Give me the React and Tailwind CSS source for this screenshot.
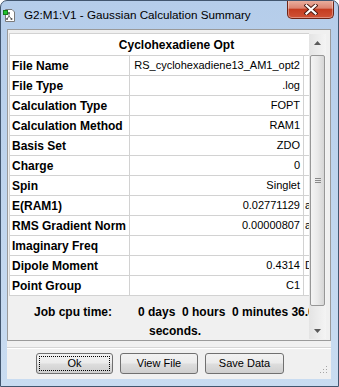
import React from 'react';

const rows = [
  ['File Name', 'RS_cyclohexadiene13_AM1_opt2', ''],
  ['File Type', '.log', ''],
  ['Calculation Type', 'FOPT', ''],
  ['Calculation Method', 'RAM1', ''],
  ['Basis Set', 'ZDO', ''],
  ['Charge', '0', ''],
  ['Spin', 'Singlet', ''],
  ['E(RAM1)', '0.02771129', 'a.u.'],
  ['RMS Gradient Norm', '0.00000807', 'a.u.'],
  ['Imaginary Freq', '', ''],
  ['Dipole Moment', '0.4314', 'Debye'],
  ['Point Group', 'C1', ''],
];

function AppIcon() {
  return (
    <svg width="12" height="14" viewBox="0 0 12 14" className="shrink-0">
      <path d="M2.5 1.5 H9 L11.5 4 V13.5 H2.5 Z" fill="#ffffff" stroke="#7a7a7a" />
      <path d="M6 5 V8 M6 8 L4 11 M6 8 L8.5 11" stroke="#6b6b6b" strokeWidth="1" fill="none" />
      <circle cx="6" cy="5" r="1" fill="#555" />
      <circle cx="4" cy="11" r="1" fill="#555" />
      <circle cx="8.5" cy="11" r="1" fill="#555" />
      <rect x="0.5" y="2.5" width="4" height="4" fill="#22c22e" stroke="#137a1a" />
    </svg>
  );
}

function CloseButton() {
  return (
    <div className="mt-[-1px] w-[47px] h-[19px] rounded-b-[5px] border border-t-0 border-[#6e2416] bg-[linear-gradient(to_bottom,#ebb3a3_0%,#dc8471_45%,#c53c20_52%,#cf5236_100%)] flex items-center justify-center shadow-[inset_0_0_0_1px_rgba(255,255,255,0.35)]">
      <svg width="14" height="11" viewBox="0 0 14 11">
        <path d="M2.5 1.5 L11.5 9.5 M11.5 1.5 L2.5 9.5" stroke="#4a1a12" strokeWidth="4" strokeLinecap="square" />
        <path d="M2.5 1.5 L11.5 9.5 M11.5 1.5 L2.5 9.5" stroke="#ffffff" strokeWidth="2.2" strokeLinecap="square" />
      </svg>
    </div>
  );
}

function ScrollBar() {
  return (
    <div className="w-[17px] mt-[4px] mb-[1px] mr-[4px] flex flex-col bg-gradient-to-r from-[#e4e4e4] to-[#f4f4f4]">
      <div className="h-[17px] flex items-center justify-center">
        <svg width="7" height="4" viewBox="0 0 7 4">
          <path d="M0 4 L3.5 0 L7 4 Z" fill="#5a5a5a" />
        </svg>
      </div>
      <div className="h-[4px]" />
      <div className="h-[251px] mx-[1px] rounded-[2px] border border-[#979797] bg-gradient-to-r from-[#f4f4f4] via-[#e9e9e9] to-[#d6d6d6] flex flex-col items-center justify-center gap-[1px]">
        <div className="w-[6px] h-[1px] bg-[#8a8a8a]" />
        <div className="w-[6px] h-[1px] bg-[#8a8a8a]" />
        <div className="w-[6px] h-[1px] bg-[#8a8a8a]" />
      </div>
      <div className="flex-1" />
      <div className="h-[17px] flex items-center justify-center">
        <svg width="7" height="4" viewBox="0 0 7 4">
          <path d="M0 0 L7 0 L3.5 4 Z" fill="#5a5a5a" />
        </svg>
      </div>
    </div>
  );
}

function Button({ children, width, focused }) {
  return (
    <div
      className={`${width} h-[21px] rounded-[3px] border border-[#707070] bg-[linear-gradient(to_bottom,#f2f2f2_0%,#ebebeb_48%,#dddddd_52%,#cfcfcf_100%)] p-[2px]`}
    >
      <div
        className={`w-full h-full flex items-center justify-center text-[11px] text-black ${
          focused ? 'border border-dotted border-black' : ''
        }`}
      >
        {children}
      </div>
    </div>
  );
}

export default function App() {
  return (
    <div className="w-[339px] h-[387px] rounded-t-[7px] border border-[#42566f] bg-gradient-to-b from-[#b5cdea] to-[#c9dcf1] flex flex-col font-['Liberation_Sans',Arial,sans-serif] text-black overflow-hidden">
      {/* Title bar */}
      <div className="h-[28px] flex items-start pr-[4px] shrink-0">
        <div className="flex items-center pl-[2px] pt-[6px] gap-[9px]">
          <AppIcon />
          <span className="text-[11.7px] leading-[16px]">G2:M1:V1 - Gaussian Calculation Summary</span>
        </div>
        <div className="flex-1" />
        <CloseButton />
      </div>

      {/* Client area */}
      <div className="relative ml-[6px] mr-[7px] h-[350px] bg-[#f0f0f0] flex flex-col shrink-0">
        {/* Scroll panel */}
        <div className="h-[312px] border border-[#9a9a9a] flex">
          <div className="flex-1 min-w-0 overflow-hidden pt-[3px] pl-[1px]">
            <div className="w-[334px] bg-white border-l border-[#d2d2d2]">
              <div className="h-[23px] border-t border-b border-[#d2d2d2] flex items-center justify-center text-[12px] font-bold">
                Cyclohexadiene Opt
              </div>
              {rows.map(([label, value, unit]) => (
                <div key={label} className="grid grid-cols-[120px_174px_40px] h-[20px] border-b border-[#d2d2d2]">
                  <div className="border-r border-[#d2d2d2] pl-[2px] flex items-center text-[12px] font-bold whitespace-nowrap">
                    {label}
                  </div>
                  <div className="border-r border-[#d2d2d2] pr-[3px] flex items-center justify-end text-[11px] whitespace-nowrap">
                    {value}
                  </div>
                  <div className="pl-[1px] flex items-center text-[11px] whitespace-nowrap overflow-hidden">
                    {unit}
                  </div>
                </div>
              ))}
            </div>
            <div className="mt-[7px] pl-[25px] flex text-[12px] font-bold leading-[19px]">
              <div className="w-[104px] shrink-0">Job cpu time:</div>
              <div className="shrink-0">
                <div className="whitespace-pre">0 days  0 hours  0 minutes 36.0</div>
                <div className="pl-[11px]">seconds.</div>
              </div>
            </div>
          </div>
          <ScrollBar />
        </div>

        {/* Separator */}
        <div className="mt-[6px] h-[2px] border-t border-[#d5d5d5] border-b border-b-white" />

        {/* Buttons */}
        <div className="mt-[4px] pl-[29px] flex gap-[7px]">
          <Button width="w-[77px]" focused>Ok</Button>
          <Button width="w-[78px]">View File</Button>
          <Button width="w-[79px]">Save Data</Button>
        </div>

        {/* Resize grip */}
        <svg width="10" height="10" viewBox="0 0 10 10" className="absolute right-[3px] bottom-[5px]">
          <rect x="8" y="2" width="1" height="1" fill="#a5a5a5" />
          <rect x="5" y="5" width="1" height="1" fill="#a5a5a5" />
          <rect x="8" y="5" width="1" height="1" fill="#a5a5a5" />
          <rect x="2" y="8" width="1" height="1" fill="#a5a5a5" />
          <rect x="5" y="8" width="1" height="1" fill="#a5a5a5" />
          <rect x="8" y="8" width="1" height="1" fill="#a5a5a5" />
        </svg>
      </div>
    </div>
  );
}
